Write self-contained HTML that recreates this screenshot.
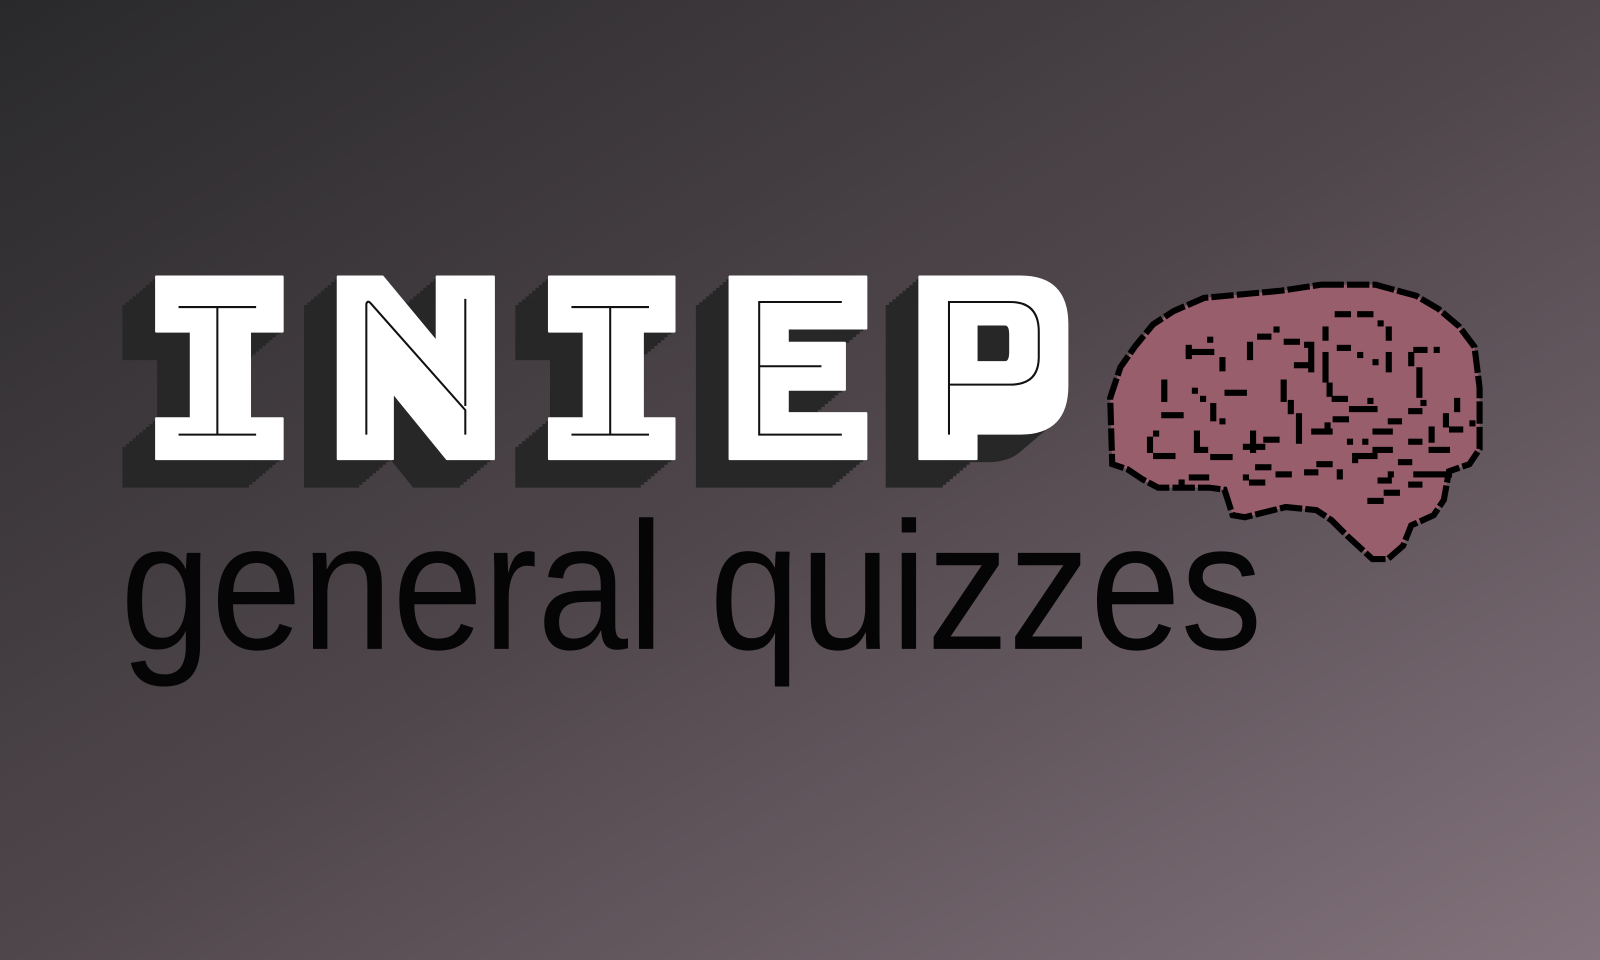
<!DOCTYPE html>
<html><head><meta charset="utf-8"><style>
html,body{margin:0;padding:0;width:1600px;height:960px;overflow:hidden}
svg{display:block}
</style></head><body>
<svg width="1600" height="960" viewBox="0 0 1568 941" preserveAspectRatio="none" xmlns="http://www.w3.org/2000/svg" xmlns:xlink="http://www.w3.org/1999/xlink">
<defs>
<linearGradient id="bg" x1="0" y1="0" x2="1" y2="1">
<stop offset="0" stop-color="#29292b"/>
<stop offset="0.5" stop-color="#4f464b"/>
<stop offset="1" stop-color="#83737c"/>
</linearGradient>
<g id="L">
<path d="M153,271 H277 V325 H245 V410 H277 V450 H153 V410 H187 V325 H153 Z"/>
<path d="M331,271 H375 L428,335 V271 H484 V450 H438 L385,385 V450 H331 Z"/>
<path d="M538,271 H661 V325 H630 V410 H661 V450 H538 V410 H572 V325 H538 Z"/>
<path d="M715,271 H849 V322 H772 V336 H828 V382 H772 V405 H849 V450 H715 Z"/>
<path d="M901,271 H1000 Q1046,271 1046,318 V378 Q1046,425 1000,425 H957 V450 H901 Z M957,318 V355 H985 Q990,355 990,345 V328 Q990,318 985,318 Z" fill-rule="evenodd"/>
</g>
</defs>
<rect width="1568" height="941" fill="url(#bg)"/>
<g fill="#272727">
<use xlink:href="#L" x="-3.3" y="2.8"/><use xlink:href="#L" x="-6.6" y="5.6"/><use xlink:href="#L" x="-9.9" y="8.4"/><use xlink:href="#L" x="-13.2" y="11.2"/><use xlink:href="#L" x="-16.5" y="14"/><use xlink:href="#L" x="-19.8" y="16.8"/><use xlink:href="#L" x="-23.1" y="19.6"/><use xlink:href="#L" x="-26.4" y="22.4"/><use xlink:href="#L" x="-29.7" y="25.2"/><use xlink:href="#L" x="-33" y="28"/>
</g>
<g fill="#fff" stroke="#fff" stroke-width="2" stroke-linejoin="round"><use xlink:href="#L"/></g>
<g fill="none" stroke="#111" stroke-width="2">
<path d="M175,301 H251 M213,301 V426 M175,426 H251"/>
<path d="M560,301 H636 M598,301 V426 M560,426 H636"/>
<path d="M359,426 V298 Q360,294 363,297 L456,402 V426 M456,398 V293"/>
<path d="M825,296 H744 V426 H825 M744,359 H805"/>
<path d="M930,426 V296 H990 Q1018,296 1018,325 V350 Q1018,377 990,377 H930"/>
</g>
<text x="118" y="636" font-family="Liberation Sans, sans-serif" font-size="178" fill="#050505" textLength="1119" lengthAdjust="spacingAndGlyphs">general quizzes</text>
<path d="M1295,279 H1348 L1388,290 L1410,303 L1430,320 L1445,340 L1450,380 L1450,440 L1440,455 L1420,462 L1415,490 L1405,505 L1383,515 L1375,535 L1360,548 L1345,548 L1320,525 L1305,510 L1290,500 L1260,497 L1220,507 L1208,505 L1200,480 L1185,478 L1135,478 L1120,470 L1105,460 L1090,455 L1088,390 L1098,360 L1112,340 L1130,318 L1150,305 L1180,292 L1255,285 Z" fill="#985e6c" stroke="#000" stroke-width="6" stroke-dasharray="22 3"/>
<g fill="#000">
<rect x="1162" y="338" width="6" height="14"/><rect x="1162" y="342" width="28" height="6"/><rect x="1195" y="350" width="6" height="14"/><rect x="1183" y="330" width="6" height="6"/>
<rect x="1138" y="372" width="6" height="22"/><rect x="1138" y="404" width="22" height="6"/><rect x="1130" y="422" width="6" height="6"/><rect x="1124" y="428" width="6" height="16"/><rect x="1130" y="444" width="22" height="6"/>
<rect x="1168" y="380" width="6" height="6"/><rect x="1176" y="388" width="6" height="6"/><rect x="1200" y="382" width="22" height="6"/><rect x="1186" y="395" width="6" height="18"/><rect x="1195" y="410" width="6" height="6"/>
<rect x="1170" y="422" width="6" height="22"/><rect x="1170" y="438" width="14" height="6"/><rect x="1186" y="445" width="22" height="6"/><rect x="1225" y="422" width="6" height="22"/><rect x="1218" y="435" width="22" height="6"/><rect x="1238" y="428" width="16" height="6"/>
<rect x="1222" y="335" width="6" height="18"/><rect x="1232" y="327" width="14" height="6"/><rect x="1248" y="320" width="6" height="6"/><rect x="1258" y="332" width="16" height="6"/><rect x="1278" y="335" width="6" height="6"/><rect x="1282" y="335" width="6" height="30"/><rect x="1268" y="355" width="16" height="6"/>
<rect x="1255" y="372" width="6" height="22"/><rect x="1262" y="392" width="6" height="14"/><rect x="1270" y="405" width="6" height="30"/><rect x="1285" y="420" width="6" height="6"/><rect x="1290" y="420" width="16" height="6"/>
<rect x="1296" y="320" width="6" height="14"/><rect x="1308" y="305" width="16" height="6"/><rect x="1330" y="305" width="16" height="6"/><rect x="1350" y="314" width="6" height="6"/><rect x="1358" y="320" width="6" height="14"/>
<rect x="1296" y="345" width="6" height="30"/><rect x="1310" y="338" width="14" height="6"/><rect x="1330" y="345" width="6" height="6"/><rect x="1345" y="352" width="6" height="6"/><rect x="1300" y="375" width="6" height="14"/><rect x="1305" y="388" width="16" height="6"/><rect x="1322" y="398" width="28" height="6"/><rect x="1340" y="390" width="6" height="6"/><rect x="1306" y="408" width="16" height="6"/><rect x="1298" y="414" width="6" height="6"/>
<rect x="1358" y="345" width="6" height="20"/><rect x="1385" y="340" width="14" height="6"/><rect x="1380" y="345" width="6" height="14"/><rect x="1405" y="340" width="6" height="6"/><rect x="1388" y="360" width="6" height="30"/><rect x="1392" y="392" width="6" height="6"/><rect x="1380" y="400" width="14" height="6"/><rect x="1360" y="410" width="14" height="6"/>
<rect x="1425" y="390" width="6" height="14"/><rect x="1414" y="405" width="6" height="14"/><rect x="1420" y="418" width="14" height="6"/><rect x="1440" y="412" width="6" height="6"/><rect x="1400" y="418" width="6" height="16"/>
<rect x="1345" y="420" width="20" height="6"/><rect x="1345" y="438" width="20" height="6"/><rect x="1320" y="430" width="6" height="6"/><rect x="1335" y="430" width="6" height="6"/><rect x="1325" y="444" width="6" height="10"/><rect x="1330" y="444" width="20" height="6"/><rect x="1310" y="460" width="6" height="10"/><rect x="1290" y="452" width="16" height="6"/><rect x="1278" y="460" width="14" height="6"/>
<rect x="1380" y="430" width="14" height="6"/><rect x="1400" y="438" width="16" height="6"/><rect x="1415" y="438" width="6" height="6"/><rect x="1370" y="450" width="14" height="6"/><rect x="1360" y="462" width="6" height="6"/><rect x="1385" y="462" width="38" height="6"/><rect x="1350" y="468" width="14" height="6"/><rect x="1380" y="472" width="14" height="6"/><rect x="1356" y="480" width="16" height="6"/><rect x="1340" y="488" width="16" height="6"/>
<rect x="1230" y="455" width="16" height="6"/><rect x="1218" y="465" width="6" height="6"/><rect x="1250" y="462" width="16" height="6"/><rect x="1224" y="470" width="16" height="6"/><rect x="1165" y="465" width="20" height="6"/><rect x="1155" y="470" width="6" height="6"/>
</g>
</svg>
</body></html>
